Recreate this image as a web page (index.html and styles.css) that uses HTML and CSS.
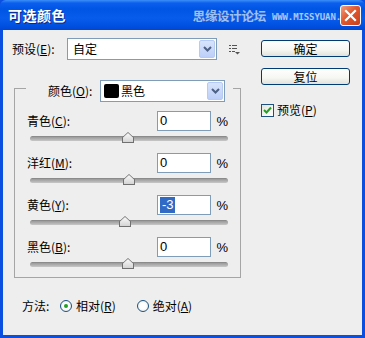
FILE: index.html
```html
<!DOCTYPE html>
<html lang="zh-CN">
<head>
<meta charset="utf-8">
<title>可选颜色</title>
<link rel="stylesheet" href="styles.css">
</head>
<body>
<div class="window">
  <div class="titlebar">
    <span class="title">可选颜色</span>
    <span class="watermark"><span class="wm-cn">思缘设计论坛</span><span class="wm-en">WWW.MISSYUAN.COM</span></span>
    <span class="close"><svg width="13" height="13" viewBox="0 0 13 13"><path d="M2 2 L11 11 M11 2 L2 11" stroke="#fff" stroke-width="2.2" stroke-linecap="square"/></svg></span>
  </div>
  <div class="client">
    <div class="main">
      <div class="preset-row">
        <span class="lbl preset-lbl">预设(<u>E</u>):</span>
        <div class="select preset-select">
          <span class="val">自定</span>
          <span class="drop"><svg width="9" height="6" viewBox="0 0 9 6"><path d="M1 1 L4.5 4.5 L8 1" fill="none" stroke="#4d6185" stroke-width="2"/></svg></span>
        </div>
        <svg class="menu-icon" width="11" height="11" viewBox="0 0 11 11"><path d="M0 1.5 H2 M3 1.5 H8 M0 4.5 H2 M3 4.5 H8 M0 7.5 H2 M3 7.5 H6" stroke="#555" stroke-width="1"/><path d="M6 8 H11 L8.5 10.5 Z" fill="#555"/></svg>
      </div>
      <div class="group">
        <div class="group-head">
          <span class="lbl color-lbl">颜色(<u>O</u>):</span>
          <div class="select color-select">
            <span class="swatch"></span><span class="val">黑色</span>
            <span class="drop"><svg width="9" height="6" viewBox="0 0 9 6"><path d="M1 1 L4.5 4.5 L8 1" fill="none" stroke="#4d6185" stroke-width="2"/></svg></span>
          </div>
        </div>
        <div class="slider-block">
          <div class="slider-row"><span class="lbl slider-lbl">青色(<u>C</u>):</span><span class="num">0</span><span class="pct">%</span></div>
          <div class="track"><span class="thumb" style="left: 98px"></span></div>
        </div>
        <div class="slider-block">
          <div class="slider-row"><span class="lbl slider-lbl">洋红(<u>M</u>):</span><span class="num">0</span><span class="pct">%</span></div>
          <div class="track"><span class="thumb" style="left: 99px"></span></div>
        </div>
        <div class="slider-block">
          <div class="slider-row"><span class="lbl slider-lbl">黄色(<u>Y</u>):</span><span class="num"><span class="sel">-3</span></span><span class="pct">%</span></div>
          <div class="track"><span class="thumb" style="left: 95px"></span></div>
        </div>
        <div class="slider-block">
          <div class="slider-row"><span class="lbl slider-lbl">黑色(<u>B</u>):</span><span class="num">0</span><span class="pct">%</span></div>
          <div class="track"><span class="thumb" style="left: 98px"></span></div>
        </div>
      </div>
      <div class="method-row">
        <span class="lbl method-lbl">方法:</span>
        <span class="radio on"></span><span class="lbl radio-lbl">相对(<u>R</u>)</span>
        <span class="radio second"></span><span class="lbl radio-lbl">绝对(<u>A</u>)</span>
      </div>
    </div>
    <div class="side">
      <div class="btn">确定</div>
      <div class="btn">复位</div>
      <div class="check-row">
        <span class="checkbox"><svg width="11" height="11" viewBox="0 0 11 11"><path d="M2 5 L4.5 7.5 L9 2.5" fill="none" stroke="#21a121" stroke-width="2"/></svg></span>
        <span class="lbl">预览(<u>P</u>)</span>
      </div>
    </div>
  </div>
</div>
</body>
</html>
```
FILE: styles.css
```css
* { box-sizing: border-box; }
html, body { margin: 0; padding: 0; }
body {
  width: 365px;
  height: 338px;
  overflow: hidden;
  background: #0b4fe0;
  font-family: "Noto Sans CJK SC", "Noto Sans", sans-serif;
  font-size: 12px;
  color: #000;
}
u { text-decoration: underline; text-underline-offset: 1px; }
.window {
  width: 365px;
  height: 338px;
  display: flex;
  flex-direction: column;
  background: #0a4fdf;
}
.titlebar {
  height: 30px;
  flex: 0 0 30px;
  display: flex;
  align-items: center;
  padding-left: 8px;
  background: linear-gradient(#3d8ff8 0, #0c5fee 3px, #0055e5 9px, #085cec 18px, #0050e0 26px, #0245d2 30px);
  border-radius: 6px 6px 0 0;
  position: relative;
}
.title {
  color: #fff;
  font-weight: bold;
  font-size: 14px;
  letter-spacing: 0.5px;
  text-shadow: 1px 1px 0 #0a2a8a;
}
.watermark {
  margin-left: auto;
  display: flex;
  align-items: center;
  gap: 6px;
  margin-right: 8px;
}
.wm-cn {
  color: #9cc0f6;
  font-size: 12.5px;
  font-weight: bold;
  letter-spacing: -0.3px;
  text-shadow: 0 0 1px #2a55c0;
}
.wm-en {
  color: #a8c8f6;
  font-family: "DejaVu Sans Mono", monospace;
  font-size: 9px;
  font-weight: bold;
  letter-spacing: -0.1px;
  margin-top: 3px;
}
.close {
  position: absolute;
  right: 4px;
  top: 5px;
  width: 21px;
  height: 21px;
  border: 1px solid #fff;
  border-radius: 3px;
  background: linear-gradient(135deg, #f0a080 0, #e0582e 45%, #c8401c 100%);
  display: flex;
  align-items: center;
  justify-content: center;
}
.client {
  flex: 1;
  margin: 0 3px 3px 3px;
  background: #eeeeee;
  display: flex;
}
.main {
  flex: 0 0 258px;
  padding: 8px 0 0 9px;
  display: flex;
  flex-direction: column;
}
.lbl { white-space: nowrap; line-height: 16px; }
.preset-row {
  display: flex;
  align-items: center;
  height: 22px;
}
.preset-lbl { width: 55px; }
.select {
  height: 22px;
  border: 1px solid #7f9db9;
  background: #fff;
  display: flex;
  align-items: center;
  padding: 1px;
}
.select .val { padding-left: 4px; flex: 1; line-height: 18px; }
.drop {
  width: 16px;
  height: 18px;
  background: linear-gradient(#d8e4fc, #bccff8);
  border: 1px solid #b7caf2;
  border-radius: 2px;
  display: flex;
  align-items: center;
  justify-content: center;
}
.preset-select { width: 150px; }
.menu-icon { margin-left: 12px; margin-top: 1px; }
.group {
  margin: 28px 0 0 2px;
  width: 227px;
  border: 1px solid #a5a5a5;
  padding: 0 12px 8px 12px;
  display: flex;
  flex-direction: column;
  gap: 10px;
}
.group-head {
  margin: -9px 0 0 -1px;
  width: 207px;
  padding: 0 8px 0 22px;
  background: #eeeeee;
  display: flex;
  align-items: center;
  height: 22px;
}
.color-lbl { width: 52px; }
.color-select { width: 125px; padding-left: 3px; }
.color-select .val { padding-left: 2px; }
.swatch {
  width: 15px;
  height: 14px;
  background: #000;
  border-radius: 2px;
}
.group-head + .slider-block { margin-top: -1px; }
.slider-block { display: flex; flex-direction: column; }
.slider-row {
  display: flex;
  align-items: center;
  height: 20px;
}
.slider-lbl { width: 131px; }
.num {
  width: 55px;
  height: 20px;
  border: 1px solid #7f9db9;
  background: #fff;
  padding-left: 2px;
  line-height: 18px;
  font-family: "Liberation Sans", Arial, sans-serif;
  font-size: 13px;
}
.sel {
  background: #316ac5;
  color: #fff;
  padding: 0 2px;
  display: inline-block;
  line-height: 16px;
  margin-top: 1px;
}
.pct {
  margin-left: 5px;
  font-family: "Liberation Sans", Arial, sans-serif;
  font-size: 13px;
}
.track {
  position: relative;
  margin: 2px 0 0 3px;
  width: 198px;
  height: 10px;
}
.track::before {
  content: "";
  position: absolute;
  left: 0;
  right: 0;
  top: 3px;
  height: 5px;
  border-radius: 3px;
  background: linear-gradient(#7c7c7c 0, #9a9a9a 1px, #b0b0b0 3px, #c8c8c8 5px);
}
.thumb {
  position: absolute;
  top: -1px;
  width: 12px;
  height: 11px;
  margin-left: -6px;
  background: #707070;
  clip-path: polygon(50% 0, 100% 50%, 100% 100%, 0 100%, 0 50%);
}
.thumb::after {
  content: "";
  position: absolute;
  left: 1px;
  top: 1px;
  right: 1px;
  bottom: 1px;
  background: linear-gradient(#fafafa, #d4d4d4);
  clip-path: polygon(50% 0, 100% 50%, 100% 100%, 0 100%, 0 50%);
}
.method-row {
  display: flex;
  align-items: center;
  margin-top: 20px;
  height: 16px;
  padding-left: 10px;
}
.method-lbl { width: 38px; }
.radio {
  width: 12px;
  height: 12px;
  border-radius: 50%;
  border: 1px solid #1c5180;
  background: radial-gradient(circle, #ffffff 40%, #e2e2dc 100%);
  margin-right: 4px;
  position: relative;
}
.radio.on::after {
  content: "";
  position: absolute;
  left: 3px;
  top: 3px;
  width: 4px;
  height: 4px;
  border-radius: 50%;
  background: #21a121;
}
.radio.second { margin-left: 21px; }
.radio-lbl { width: auto; }
.side {
  flex: 1;
  padding: 10px 0 0 0;
  display: flex;
  flex-direction: column;
}
.btn {
  width: 89px;
  height: 17px;
  border: 1px solid #003c74;
  border-radius: 3px;
  background: linear-gradient(#ffffff 0, #f6f6f2 60%, #e2e1da 100%);
  display: flex;
  align-items: center;
  justify-content: center;
  line-height: 15px;
  margin-bottom: 11px;
}
.check-row {
  display: flex;
  align-items: center;
  margin-top: 6px;
  gap: 3px;
}
.checkbox {
  width: 13px;
  height: 13px;
  border: 1px solid #1c5180;
  background: linear-gradient(135deg, #e4e4dc, #fff);
  display: flex;
  align-items: center;
  justify-content: center;
}
```
